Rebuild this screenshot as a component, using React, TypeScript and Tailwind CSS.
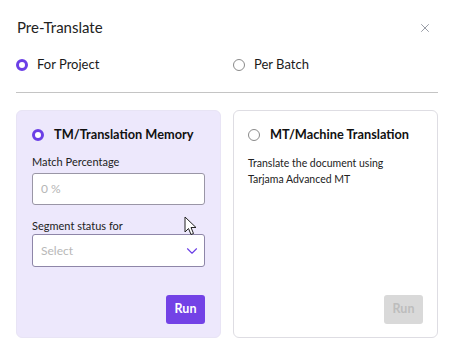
import { X, ChevronDown } from "lucide-react";

function Radio({ checked }: { checked?: boolean }) {
  return checked ? (
    <span className="block h-[12px] w-[12px] shrink-0 rounded-full border-[3px] border-[#6b3fe6] bg-white" />
  ) : (
    <span className="block h-[12px] w-[12px] shrink-0 rounded-full border border-[#8a8a8a] bg-white" />
  );
}

export default function App() {
  return (
    <div className="relative h-[352px] w-[451px] bg-white pl-4 pr-[13px] text-[#1a1a1a]" style={{ fontFamily: "Lato, 'Noto Sans', sans-serif" }}>
      {/* header */}
      <div className="flex h-[54px] items-center justify-between pl-[1px] pr-[6px] pt-[1px]">
        <h2 className="text-[15px] text-[#222]">Pre-Translate</h2>
        <X className="h-[14px] w-[14px] text-[#8a8f99]" strokeWidth={1.5} />
      </div>

      {/* scope */}
      <div className="flex h-[22px] items-center text-[13px]">
        <label className="flex w-[217px] items-center gap-[9px]">
          <Radio checked />
          <span>For Project</span>
        </label>
        <label className="flex items-center gap-[9px]">
          <Radio />
          <span>Per Batch</span>
        </label>
      </div>

      <div className="mt-[16px] h-px bg-[#c4c4c4]" />

      {/* cards */}
      <div className="mt-[17px] flex gap-3">
        <div className="flex h-[228px] w-[205px] shrink-0 flex-col rounded-[6px] border border-[#e8e4f5] bg-[#ede8fc] px-[15px] pb-[13px] pt-[15px]">
          <div className="flex h-[18px] items-center gap-[10px]">
            <Radio checked />
            <span className="whitespace-nowrap text-[12.75px] font-bold text-[#111]">TM/Translation Memory</span>
          </div>
          <div className="mt-[11px] text-[11px] leading-[14px] text-[#222]">Match Percentage</div>
          <div className="mt-[4px] flex h-[32px] items-center rounded-[3px] border border-[#9a96a6] bg-white px-[8px] text-[12px] text-[#b5b5b5]">
            0 %
          </div>
          <div className="mt-[14px] text-[11px] leading-[14px] text-[#222]">Segment status for</div>
          <div className="mt-[1px] flex h-[33px] items-center justify-between rounded-[3px] border border-[#8e86a8] bg-white pl-[8px] pr-[3px] text-[12px] text-[#b8b8b8]">
            <span>Select</span>
            <ChevronDown className="h-[18px] w-[18px] text-[#6b3fe6]" strokeWidth={1.5} />
          </div>
          <div className="mt-auto flex justify-end">
            <button className="h-[29px] w-[39px] rounded-[3px] bg-[#7342e6] text-[12.5px] font-bold text-white">Run</button>
          </div>
        </div>

        <div className="flex h-[228px] w-[205px] shrink-0 flex-col rounded-[6px] border border-[#dedde3] bg-white px-[14px] pb-[13px] pt-[15px]">
          <div className="flex h-[18px] items-center gap-[10px]">
            <Radio />
            <span className="whitespace-nowrap text-[12.75px] font-bold text-[#111]">MT/Machine Translation</span>
          </div>
          <p className="mt-[11px] text-[10.5px] leading-[16px] text-[#222]">
            Translate the document using
            <br />
            Tarjama Advanced MT
          </p>
          <div className="mt-auto flex justify-end">
            <button className="h-[29px] w-[39px] rounded-[3px] bg-[#d9d9d9] text-[12.5px] font-bold text-[#bdbdbd]">Run</button>
          </div>
        </div>
      </div>

      {/* mouse cursor */}
      <svg className="absolute left-[184px] top-[216px]" width="13" height="20" viewBox="0 0 13 20">
        <path d="M1 1 L1 16 L4.5 12.5 L7 18.5 L9.5 17.5 L7 11.5 L12 11.5 Z" fill="white" stroke="#222" strokeWidth="1" strokeLinejoin="round" />
      </svg>
    </div>
  );
}
